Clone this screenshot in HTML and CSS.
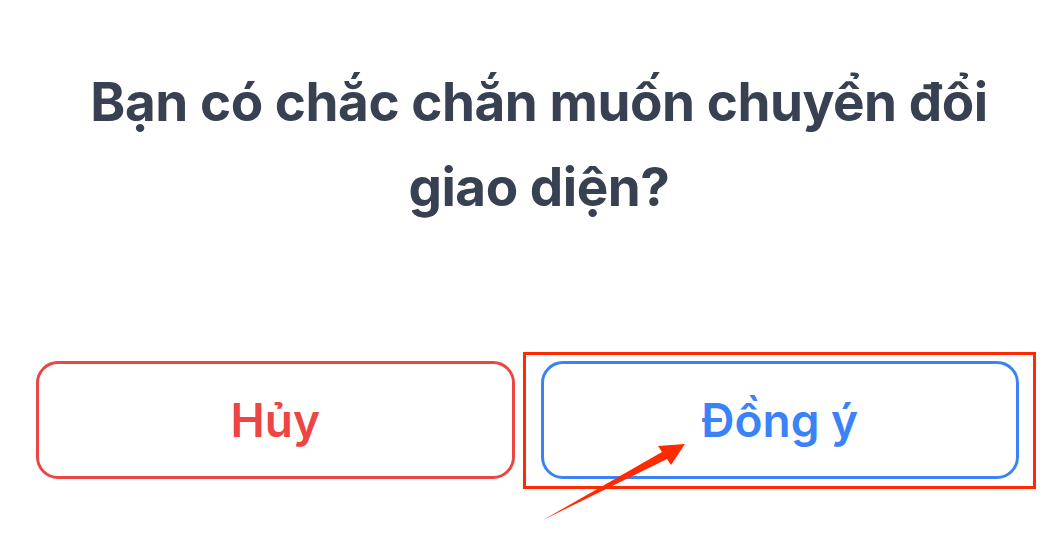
FILE: index.html
```html
<!DOCTYPE html>
<html lang="vi">
<head>
<meta charset="utf-8">
<title>Xác nhận</title>
<link rel="stylesheet" href="styles.css">
</head>
<body>
<div class="dialog">
  <h1 class="title">Bạn có chắc chắn muốn chuyển đổi giao diện?</h1>
  <div class="actions">
    <button class="btn btn-cancel">Hủy</button>
    <button class="btn btn-ok">Đồng ý</button>
  </div>
  <div class="highlight"></div>
  <svg class="arrow" width="1058" height="537" viewBox="0 0 1058 537">
    <polygon points="543,520 662,452 658,446 685,444 671,465 667,459" fill="#ff2a00"/>
  </svg>
</div>
</body>
</html>
```
FILE: styles.css
```css
html, body {
  margin: 0;
  padding: 0;
  background: #ffffff;
}
body {
  width: 1058px;
  height: 537px;
  overflow: hidden;
  font-family: Inter, "Noto Sans", "DejaVu Sans", sans-serif;
}
.dialog {
  position: relative;
  width: 1058px;
  height: 537px;
  background: #ffffff;
}
.title {
  margin: 0;
  padding: 60px 60px 0 80px;
  font-size: 53px;
  line-height: 85px;
  font-weight: 700;
  color: #374151;
  text-align: center;
  letter-spacing: -0.45px;
}
.actions {
  display: flex;
  gap: 26px;
  padding: 0 39px 0 36px;
  margin-top: 131px;
}
.btn {
  flex: 1;
  height: 118px;
  background: #ffffff;
  border-radius: 22px;
  border: 3px solid;
  font-family: Inter, "Noto Sans", sans-serif;
  font-size: 46px;
  font-weight: 600;
  padding: 0;
}
.btn-cancel {
  border-color: #ef4444;
  color: #ef4444;
}
.btn-ok {
  border-color: #3b82f6;
  color: #3b82f6;
}
.highlight {
  position: absolute;
  left: 523px;
  top: 352px;
  width: 507px;
  height: 131px;
  border: 3px solid #ff2a00;
}
.arrow {
  position: absolute;
  left: 0;
  top: 0;
}
```
